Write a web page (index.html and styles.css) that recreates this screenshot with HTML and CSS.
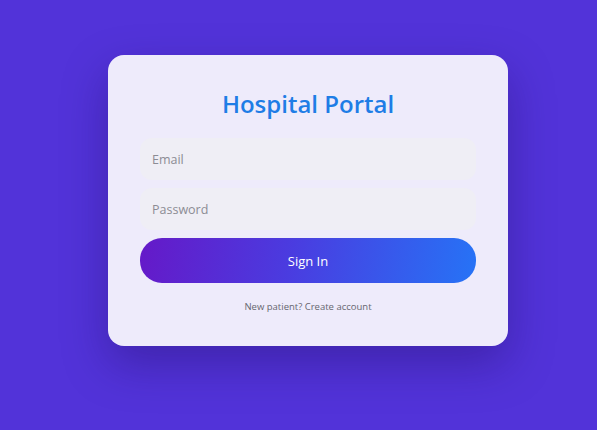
FILE: index.html
```html
<!DOCTYPE html>
<html lang="en">
<head>
<meta charset="utf-8">
<title>Hospital Portal</title>
<link rel="stylesheet" href="styles.css">
</head>
<body>
  <main class="page">
    <form class="card">
      <h1 class="title">Hospital Portal</h1>
      <input class="field" type="email" placeholder="Email">
      <input class="field" type="password" placeholder="Password">
      <button class="btn" type="button">Sign In</button>
      <p class="footer">New patient? Create account</p>
    </form>
  </main>
</body>
</html>
```
FILE: styles.css
```css
* { box-sizing: border-box; }
html, body {
  margin: 0;
  height: 100%;
}
body {
  background: #5233d9;
  font-family: "Open Sans", "Noto Sans", sans-serif;
}
.page {
  padding: 55px 0 0 108px;
}
.card {
  width: 400px;
  background: #eeebfb;
  border-radius: 16px;
  padding: 32px;
  display: flex;
  flex-direction: column;
  box-shadow: 0 18px 45px rgba(30, 10, 90, 0.35);
}
.title {
  margin: 0 0 17px;
  text-align: center;
  font-size: 24px;
  line-height: 34px;
  font-weight: 600;
  color: #1e7de6;
}
.field {
  height: 42px;
  width: 100%;
  border: none;
  outline: none;
  border-radius: 12px;
  background: #efeef5;
  padding: 0 12px;
  font-family: inherit;
  font-size: 12.5px;
  color: #333;
  margin-bottom: 8px;
}
.field::placeholder { color: #8c8c94; }
.btn {
  height: 45px;
  width: 100%;
  border: none;
  border-radius: 22px;
  background: linear-gradient(100deg, #6519c8 0%, #4a3ce0 45%, #2673f6 100%);
  color: #fff;
  font-family: inherit;
  font-size: 13px;
  font-weight: 500;
  cursor: pointer;
}
.footer {
  margin: 17px 0 0;
  text-align: center;
  font-size: 9.5px;
  line-height: 14px;
  color: #666670;
}
```
